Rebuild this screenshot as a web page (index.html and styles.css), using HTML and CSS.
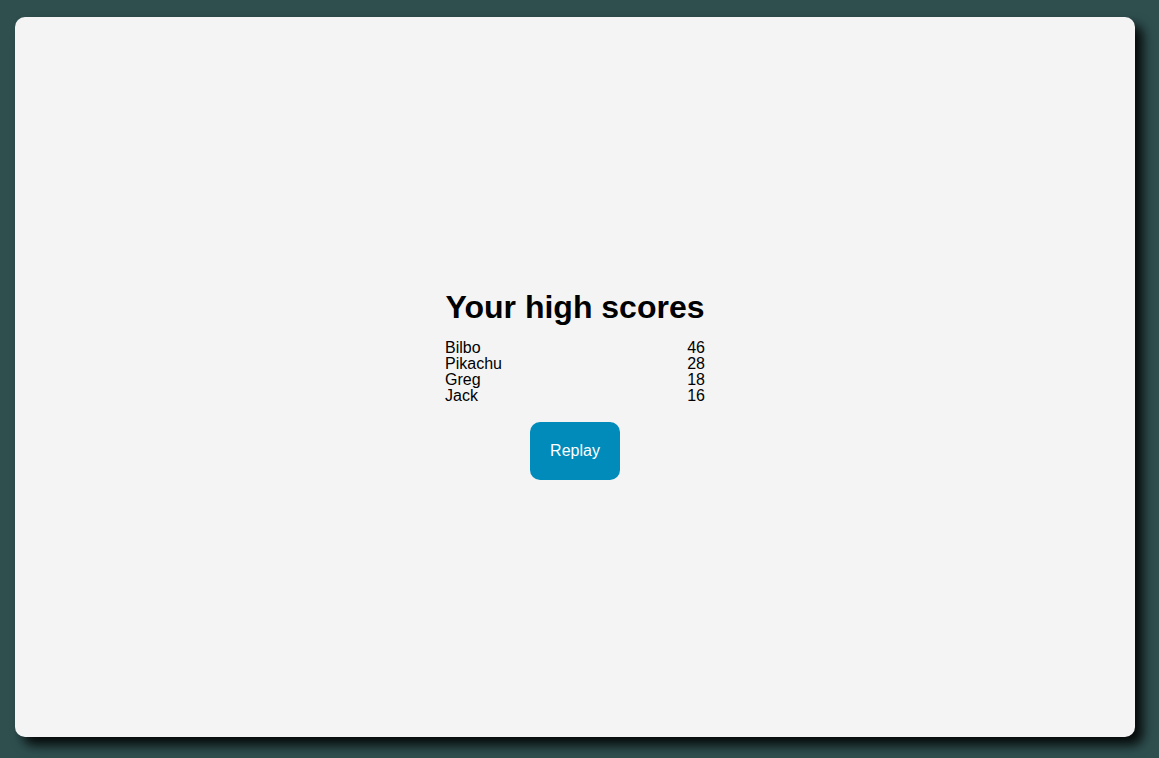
FILE: index.html
```html
<!DOCTYPE html>
<html>
<head>
<meta charset="utf-8">
<link rel="stylesheet" href="styles.css">
</head>
<body>
<div class="card">
  <div class="scores">
    <h1 class="title">Your high scores</h1>
    <ul class="list">
      <li class="row"><span>Bilbo</span><span>46</span></li>
      <li class="row"><span>Pikachu</span><span>28</span></li>
      <li class="row"><span>Greg</span><span>18</span></li>
      <li class="row"><span>Jack</span><span>16</span></li>
    </ul>
    <button class="replay">Replay</button>
  </div>
</div>
</body>
</html>
```
FILE: styles.css
```css
html, body {
  margin: 0;
  padding: 0;
  height: 100%;
}
body {
  background: #2f4f4f;
  font-family: "Liberation Sans", Arial, sans-serif;
  padding: 17px 24px 21px 15px;
  box-sizing: border-box;
}
.card {
  background: #f4f4f4;
  border-radius: 10px;
  height: 720px;
  width: 1120px;
  box-shadow: 8px 8px 12px rgba(0, 0, 0, 0.9);
  display: flex;
  align-items: center;
  justify-content: center;
}
.scores {
  display: flex;
  flex-direction: column;
  align-items: center;
  width: 260px;
  margin-top: 14px;
}
.title {
  font-size: 32px;
  font-weight: bold;
  margin: 0 0 14px;
  color: #000;
}
.list {
  list-style: none;
  margin: 0 0 18px;
  padding: 0;
  width: 100%;
}
.row {
  display: flex;
  justify-content: space-between;
  font-size: 16px;
  line-height: 16px;
  color: #000;
}
.replay {
  width: 90px;
  height: 58px;
  border: none;
  border-radius: 10px;
  background: #008bba;
  color: #fff;
  font-family: "Liberation Sans", Arial, sans-serif;
  font-size: 16px;
  padding: 0;
}
```
